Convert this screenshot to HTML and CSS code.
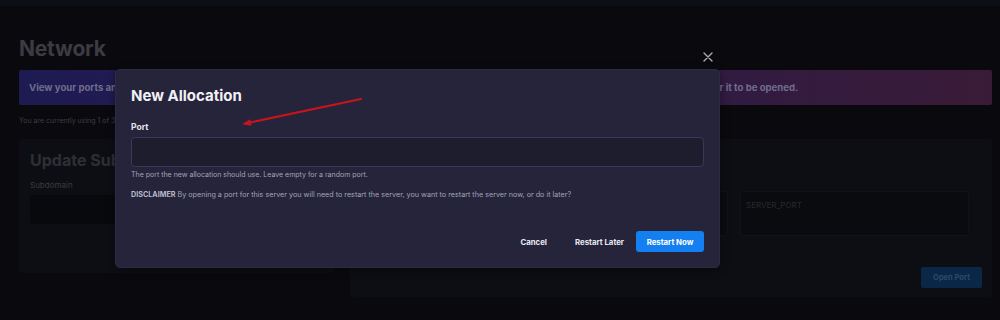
FILE: index.html
```html
<!DOCTYPE html>
<html lang="en">
<head>
<meta charset="utf-8">
<title>Network</title>
<link rel="stylesheet" href="styles.css">
</head>
<body>
<div class="topbar"></div>
<main class="page">
  <h1 class="page-title">Network</h1>
  <div class="banner">View your ports and allocations for this server here. If you need an additional port for your server, press the Open Port button below and then wait for it to be opened.</div>
  <p class="usage">You are currently using 1 of 3 allowed allocations.</p>
  <div class="columns">
    <section class="card card-left">
      <h2 class="card-title">Update Subdomain</h2>
      <label class="field-label">Subdomain</label>
      <div class="fake-input"></div>
    </section>
    <section class="card card-right">
      <h2 class="card-title">Open Port</h2>
      <div class="inputs-row">
        <div class="fake-input wide"></div>
        <div class="fake-input narrow"><span class="placeholder">SERVER_PORT</span></div>
      </div>
      <div class="card-actions">
        <button class="btn-open">Open Port</button>
      </div>
    </section>
  </div>
</main>

<div class="modal">
  <h3 class="modal-title">New Allocation</h3>
  <label class="modal-label">Port</label>
  <div class="modal-input"></div>
  <p class="helper">The port the new allocation should use. Leave empty for a random port.</p>
  <p class="disclaimer"><strong>DISCLAIMER</strong> By opening a port for this server you will need to restart the server, you want to restart the server now, or do it later?</p>
  <div class="modal-actions">
    <button class="btn-text btn-cancel">Cancel</button>
    <button class="btn-text btn-later">Restart Later</button>
    <button class="btn-primary">Restart Now</button>
  </div>
</div>

<svg class="close-x" width="10" height="10" viewBox="0 0 10 10"><path d="M1 1 L9 9 M9 1 L1 9" stroke="#a9a9b0" stroke-width="1.4" stroke-linecap="round"/></svg>

<svg class="arrow" width="1000" height="320" viewBox="0 0 1000 320">
  <line x1="361" y1="99" x2="249" y2="122.7" stroke="#c9141d" stroke-width="2" stroke-linecap="round"/>
  <polygon points="242,124.3 251.6,125.8 250.2,119.2" fill="#c9141d"/>
</svg>
</body>
</html>
```

FILE: styles.css
```css
* { box-sizing: border-box; }
html, body { margin: 0; padding: 0; }
body {
  width: 1000px;
  height: 320px;
  overflow: hidden;
  background: #0a0a0e;
  font-family: Inter, "Liberation Sans", sans-serif;
  position: relative;
}
.topbar {
  height: 6px;
  background: #0c0f16;
}
.page {
  padding: 0 8px 0 19px;
}
.page-title {
  margin: 0;
  padding-top: 30px;
  font-size: 21px;
  line-height: 26px;
  font-weight: 700;
  color: #3b3b41;
  letter-spacing: -0.2px;
}
.banner {
  margin-top: 8px;
  height: 35px;
  display: flex;
  align-items: center;
  padding-left: 10px;
  background: linear-gradient(90deg, #1e1b53 0%, #2a1b4a 50%, #3a1b37 100%);
  border-radius: 2px;
  font-size: 9.6px;
  font-weight: 700;
  color: #6f6d8c;
  white-space: nowrap;
  overflow: hidden;
}
.usage {
  margin: 11px 0 0;
  font-size: 7px;
  line-height: 10px;
  color: #3d3d44;
}
.columns {
  display: grid;
  grid-template-columns: 316px 1fr;
  gap: 15px;
  margin-top: 13px;
}
.card {
  background: #0d0e13;
  border-radius: 4px;
}
.card-left {
  height: 134px;
  padding: 10px 11px;
}
.card-right {
  height: 158px;
  padding: 10px 10px 10px 15px;
}
.card-title {
  margin: 0;
  font-size: 16px;
  line-height: 22px;
  font-weight: 700;
  color: #2e2f35;
}
.card-right .card-title { visibility: hidden; }
.field-label {
  display: block;
  margin-top: 8px;
  font-size: 8px;
  line-height: 12px;
  color: #3a3b41;
}
.fake-input {
  margin-top: 4px;
  height: 29px;
  background: #08090c;
  border-radius: 3px;
}
.inputs-row {
  display: grid;
  grid-template-columns: 1fr 229px;
  gap: 12px;
  margin-top: 20px;
  padding-right: 13px;
}
.inputs-row .fake-input {
  margin-top: 0;
  height: 45px;
  background: #0a0b0f;
  border: 1px solid #121318;
  padding: 8px 5px;
  font-size: 8px;
  line-height: 10px;
}
.placeholder {
  font-size: 8px;
  color: #27282d;
}
.card-actions {
  display: flex;
  justify-content: flex-end;
  margin-top: 31px;
}
.btn-open {
  width: 61px;
  height: 21px;
  border: 0;
  border-radius: 2px;
  background: #0b2748;
  color: #2b496b;
  font-family: inherit;
  font-size: 7.5px;
  font-weight: 700;
}

/* modal */
.modal {
  position: absolute;
  left: 115px;
  top: 69px;
  width: 605px;
  height: 199px;
  background: #25243b;
  border: 1px solid #2c2b45;
  border-radius: 5px;
  padding: 16px 15px 0 15px;
  box-shadow: 0 2px 8px rgba(0,0,0,0.4);
}
.modal-title {
  margin: 0;
  font-size: 15px;
  line-height: 20px;
  font-weight: 700;
  color: #f1f1f6;
}
.modal-label {
  display: block;
  margin-top: 15px;
  font-size: 8.5px;
  line-height: 12px;
  font-weight: 700;
  color: #e4e4ec;
}
.modal-input {
  margin-top: 4px;
  height: 30px;
  background: #1e1d2e;
  border: 1px solid #3a3857;
  border-radius: 4px;
}
.helper {
  margin: 3px 0 0;
  font-size: 7px;
  line-height: 10px;
  color: #a3a3b8;
}
.disclaimer {
  margin: 10px 0 0;
  font-size: 7.2px;
  line-height: 10px;
  color: #a3a3b8;
}
.disclaimer strong {
  color: #b9b9c9;
  font-weight: 700;
}
.modal-actions {
  display: flex;
  justify-content: flex-end;
  align-items: center;
  margin-top: 31px;
}
.btn-text, .btn-primary {
  height: 21px;
  border: 0;
  font-family: inherit;
  font-size: 7.8px;
  font-weight: 700;
  padding: 0 10px;
  cursor: pointer;
}
.btn-text {
  background: transparent;
  color: #e8e8f0;
}
.btn-cancel { margin-right: 8px; }
.btn-later { margin-right: 2px; }
.btn-primary {
  width: 68px;
  padding: 0;
  background: #137ff0;
  color: #ffffff;
  border-radius: 3px;
}
.close-x {
  position: absolute;
  left: 703px;
  top: 52px;
}
.arrow {
  position: absolute;
  left: 0;
  top: 0;
  pointer-events: none;
}
```
